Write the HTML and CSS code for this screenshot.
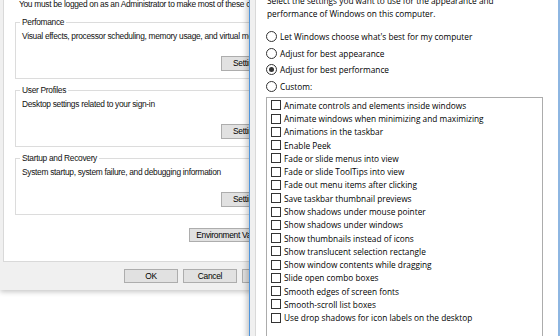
FILE: index.html
```html
<!DOCTYPE html>
<html lang="en">
  <head>
    <meta charset="UTF-8" />
    <meta name="viewport" content="width=device-width, initial-scale=1.0" />
    <title>System Properties - Performance Options</title>
    <link rel="stylesheet" href="styles.css">
  </head>
  <body>
    <div class="desktop">
      <div class="window sys-props">
        <div class="tab-page">
          <p class="note">You must be logged on as an Administrator to make most of these changes.</p>

          <div class="group">
            <div class="group-title">Perfomance</div>
            <p class="group-text">Visual effects, processor scheduling, memory usage, and virtual memory</p>
            <div class="group-actions"><button class="btn btn-settings">Settings...</button></div>
          </div>

          <div class="group">
            <div class="group-title">User Profiles</div>
            <p class="group-text">Desktop settings related to your sign-in</p>
            <div class="group-actions"><button class="btn btn-settings">Settings...</button></div>
          </div>

          <div class="group">
            <div class="group-title">Startup and Recovery</div>
            <p class="group-text">System startup, system failure, and debugging information</p>
            <div class="group-actions"><button class="btn btn-settings">Settings...</button></div>
          </div>

          <div class="env-row"><button class="btn btn-env">Environment Variables...</button></div>
        </div>
        <div class="dialog-buttons">
          <button class="btn btn-dialog">OK</button>
          <button class="btn btn-dialog">Cancel</button>
          <button class="btn btn-dialog">Apply</button>
        </div>
      </div>

      <div class="window perf-opts">
        <div class="tab-page">
          <p class="intro">Select the settings you want to use for the appearance and<br />performance of Windows on this computer.</p>

          <div class="radios">
            <label class="radio"><span class="radio-mark"></span>Let Windows choose what's best for my computer</label>
            <label class="radio"><span class="radio-mark"></span>Adjust for best appearance</label>
            <label class="radio"><span class="radio-mark checked"></span>Adjust for best performance</label>
            <label class="radio"><span class="radio-mark"></span>Custom:</label>
          </div>

          <ul class="effects">
            <li><span class="check"></span>Animate controls and elements inside windows</li>
            <li><span class="check"></span>Animate windows when minimizing and maximizing</li>
            <li><span class="check"></span>Animations in the taskbar</li>
            <li><span class="check"></span>Enable Peek</li>
            <li><span class="check"></span>Fade or slide menus into view</li>
            <li><span class="check"></span>Fade or slide ToolTips into view</li>
            <li><span class="check"></span>Fade out menu items after clicking</li>
            <li><span class="check"></span>Save taskbar thumbnail previews</li>
            <li><span class="check"></span>Show shadows under mouse pointer</li>
            <li><span class="check"></span>Show shadows under windows</li>
            <li><span class="check"></span>Show thumbnails instead of icons</li>
            <li><span class="check"></span>Show translucent selection rectangle</li>
            <li><span class="check"></span>Show window contents while dragging</li>
            <li><span class="check"></span>Slide open combo boxes</li>
            <li><span class="check"></span>Smooth edges of screen fonts</li>
            <li><span class="check"></span>Smooth-scroll list boxes</li>
            <li><span class="check"></span>Use drop shadows for icon labels on the desktop</li>
          </ul>
        </div>
      </div>

      <div class="edge"></div>
    </div>
  </body>
</html>
```

FILE: styles.css
```css
body {
  margin: 0;
  background: #ffffff;
  font-family: "Open Sans", "Noto Sans", sans-serif;
  font-size: 8.3px;
  color: #000000;
}
p {
  margin: 0;
}
.desktop {
  position: relative;
  width: 560px;
  height: 336px;
  overflow: hidden;
  background: #ffffff;
}
.window {
  position: absolute;
  background: #f0f0f0;
  white-space: nowrap;
}
.tab-page {
  background: #ffffff;
  border: 1px solid #d9d9d9;
}

/* System Properties */
.sys-props {
  left: 0;
  top: -10px;
  width: 303px;
  font-family: "Liberation Sans", Arial, sans-serif;
  font-size: 8.4px;
  letter-spacing: -0.3px;
  color: #111111;
  box-shadow: 0 2px 5px rgba(0, 0, 0, 0.22);
}
.sys-props .tab-page {
  margin-left: 3px;
  width: 294px;
  padding: 7px 0 19px;
}
.note {
  line-height: 13px;
  padding-left: 15px;
}
.group {
  margin: 11px 11px 0;
  padding: 0 7px 7px 6px;
  border: 1px solid #dcdcdc;
}
.group-title {
  display: table;
  margin: -7px 0 0 -2px;
  padding: 0 2px;
  line-height: 13px;
  background: #ffffff;
}
.group-text {
  line-height: 14px;
}
.group-actions {
  display: flex;
  justify-content: flex-end;
  margin-top: 13px;
}
.btn {
  font-family: inherit;
  font-size: inherit;
  letter-spacing: inherit;
  color: #000000;
  background: #e1e1e1;
  border: 1px solid #adadad;
  padding: 0;
  margin: 0;
  height: 15px;
  line-height: 13px;
  text-align: center;
}
.btn-settings {
  width: 58px;
}
.env-row {
  display: flex;
  justify-content: flex-end;
  margin: 13px 11px 0 0;
}
.btn-env {
  width: 98px;
  height: 14px;
  line-height: 12px;
}
.dialog-buttons {
  display: flex;
  justify-content: flex-end;
  gap: 5px;
  padding: 7px 7px 7px 0;
}
.btn-dialog {
  width: 54px;
  height: 14px;
  line-height: 12px;
}

/* Performance Options */
.perf-opts {
  left: 249px;
  top: -25px;
  width: 307px;
  height: 380px;
  padding: 5px 4px 0 5px;
  border-left: 1px solid #4f95dc;
  border-right: 1px solid #4f95dc;
  box-shadow: -2px 0 6px rgba(0, 0, 0, 0.25);
}
.perf-opts .tab-page {
  height: 360px;
  padding-top: 13px;
  padding-left: 10px;
}
.intro {
  line-height: 13px;
  padding-left: 1px;
}
.radios {
  margin-top: 8px;
}
.radio {
  display: flex;
  align-items: center;
  height: 16.7px;
}
.radio-mark {
  position: relative;
  box-sizing: border-box;
  width: 11px;
  height: 11px;
  margin-right: 3px;
  border: 1px solid #333333;
  border-radius: 50%;
  background: #ffffff;
}
.radio-mark.checked::after {
  content: "";
  position: absolute;
  left: 2px;
  top: 2px;
  width: 5px;
  height: 5px;
  border-radius: 50%;
  background: #333333;
}
.effects {
  list-style: none;
  margin: 2px 0 0;
  padding: 1px 0 0 4px;
  width: 271px;
  height: 260px;
  border: 1px solid #acacac;
}
.effects li {
  display: flex;
  align-items: center;
  height: 13.27px;
}
.check {
  box-sizing: border-box;
  width: 10px;
  height: 10px;
  margin-right: 3px;
  border: 1px solid #333333;
  background: #ffffff;
}
.edge {
  position: absolute;
  left: 558px;
  top: 0;
  width: 2px;
  height: 336px;
  background: #8db6e2;
}
```
